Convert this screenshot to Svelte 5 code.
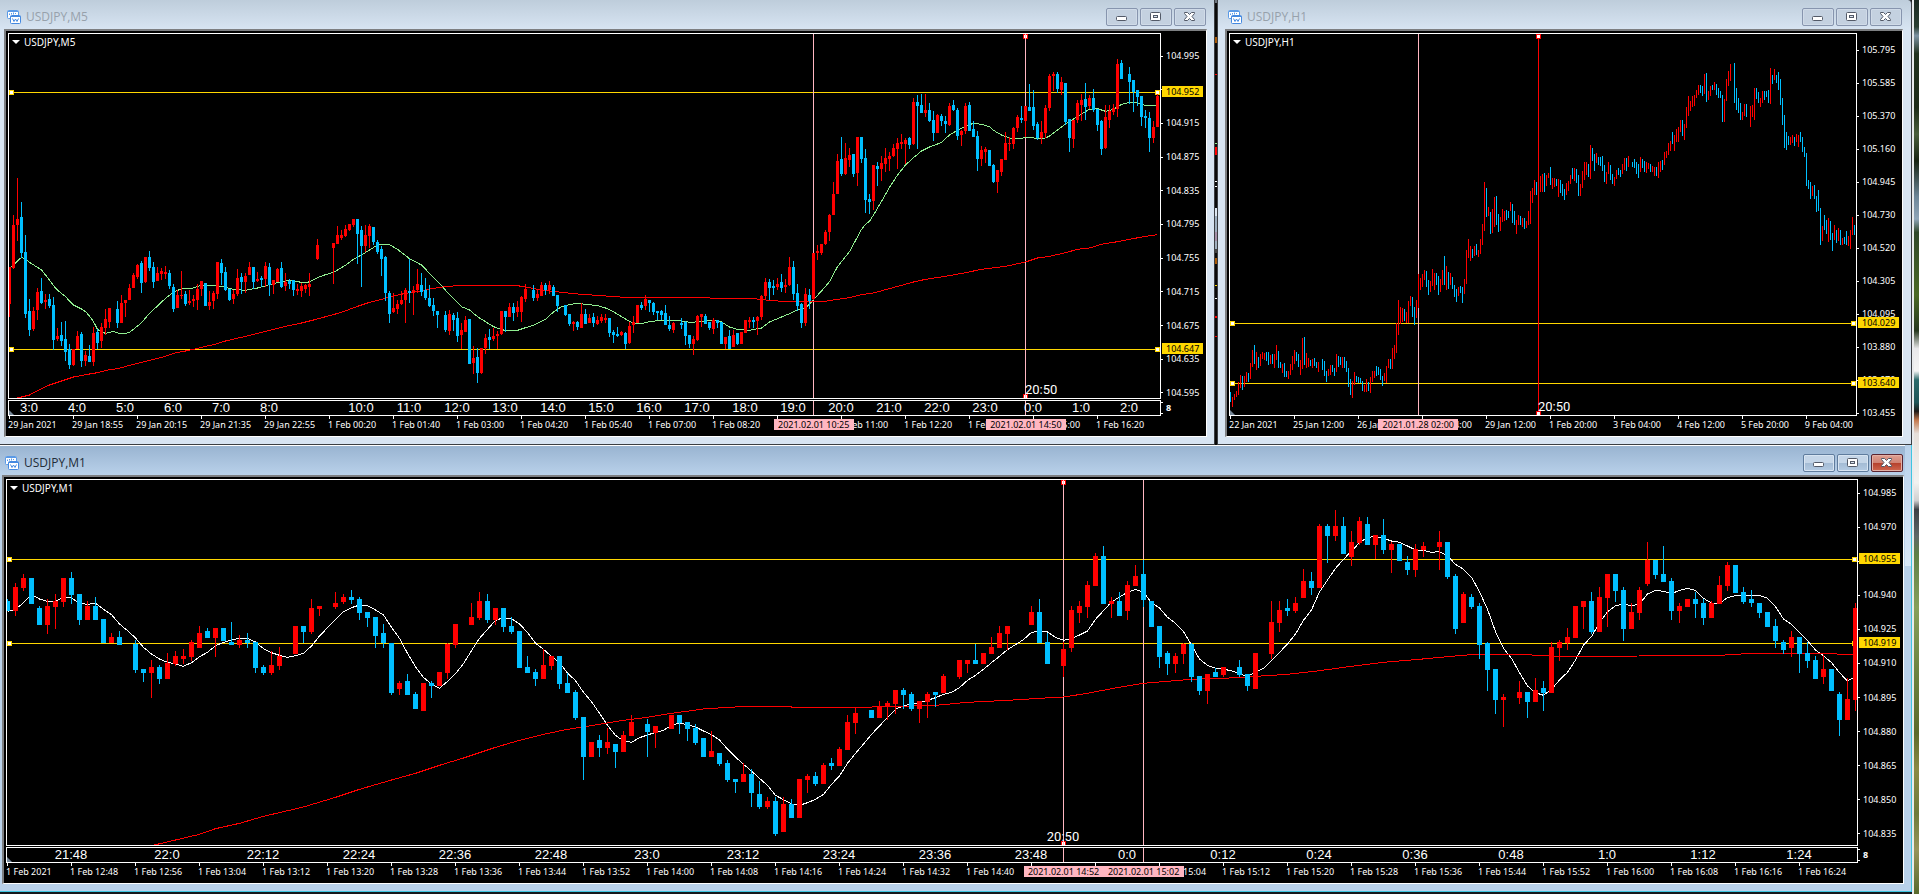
<script>
  // Bars are listed left to right, one slot each: colour (r up, b down), then high, body top,
  // body bottom and low for candles, or high and low for plain bars. "-" is an empty slot.
  // Heights are stored in thirds of a pixel row.
  const m5Bars = `r800 800 912 951,r645 675 804 807,r534 657 675 723,b606 651 759 774,b705 756 942 954,b897 933 990 1008,r921 933 987 993,r864 876 930 960,b834 873 909 912,r882 900 906 927,b882 897 918 924,b891 915 1020 1050,r984 1008 1018 1023,b966 1005 1023 1038,b963 1017 1056 1083,b1032 1048 1095 1107,r1048 1048 1095 1098,r993 1008 1048 1048,b996 1002 1083 1101,r1053 1065 1083 1098,b1035 1068 1085 1086,r981 999 1085 1098,b987 996 1029 1048,r969 981 1023 1044,r927 957 984 1005,r924 924 966 984,-,b903 927 969 984,r885 909 969 969,r900 900 909 951,r852 864 900 900,r819 825 864 864,r792 795 831 837,b783 789 849 879,r771 771 846 849,b753 771 804 813,b786 801 846 864,r801 819 843 843,r804 813 822 840,r798 816 822 837,b810 819 858 867,b852 861 927 936,r870 885 924 924,r813 885 888 897,b873 882 912 918,r870 903 909 915,r885 897 903 921,r852 867 900 930,r843 843 867 888,b849 849 918 918,r873 906 918 930,r873 879 903 927,r786 786 882 897,b777 789 819 855,b801 816 870 873,b867 867 900 903,r870 882 897 912,r807 834 882 888,b819 831 846 882,r819 828 846 879,r786 801 825 825,b801 801 846 867,r816 837 843 846,b828 834 840 861,r786 798 837 861,b789 801 855 888,r840 840 855 882,r804 807 846 846,b786 804 861 864,r819 846 858 873,b837 843 852 867,b840 840 870 888,r852 867 873 885,r849 858 873 891,r852 855 867 879,r819 852 861 888,-,r717 735 777 780,-,-,-,r729 729 744 852,r678 705 732 732,r690 705 714 720,r675 687 708 711,r672 672 690 693,r657 657 675 681,b657 657 702 792,b678 690 738 861,r675 705 738 756,r672 678 708 744,b681 681 726 735,b720 726 756 762,b738 747 777 828,b768 771 879 903,b873 879 942 969,r879 924 936 939,r900 912 927 942,r873 900 912 915,r864 870 900 969,b777 873 879 909,r858 870 879 945,r807 852 870 879,b819 855 876 888,b834 870 894 900,b855 894 918 921,b894 915 933 948,b933 933 945 984,-,b933 945 990 996,r930 942 993 1005,b939 945 960 993,b936 954 1008 1026,r969 990 1005 1048,r948 960 996 996,b957 957 1092 1092,r1038 1074 1089 1122,b1044 1071 1119 1149,r1044 1044 1119 1122,r1002 1014 1044 1062,b987 1011 1020 1048,r984 1008 1018 1023,r993 1002 1008 1048,r933 933 1002 1005,b933 933 951 996,r909 921 951 951,b909 921 939 963,r903 921 936 951,r888 891 936 966,r852 867 897 906,-,b855 870 894 903,r870 882 894 903,r846 855 888 888,b849 855 870 885,r843 855 870 882,b855 861 888 888,b885 885 918 936,-,b915 915 945 948,b942 942 972 978,r963 966 972 993,b963 966 981 990,r909 942 984 984,b927 942 972 972,r942 954 969 969,b939 951 969 981,r948 960 972 975,r942 951 963 969,r942 954 960 969,b954 954 999 1011,b990 996 1005 1029,b981 1002 1008 1011,r993 996 1005 1008,b996 999 1032 1048,r966 978 1029 1032,r948 966 975 999,r915 915 969 969,b906 915 924 930,r885 897 918 930,b900 900 909 936,b906 909 936 945,b933 933 939 960,b930 933 945 960,b915 939 975 975,b948 975 987 993,r966 969 990 999,-,b954 969 975 987,b963 966 1008 1035,b1005 1005 1032 1044,r1008 1018 1032 1065,r945 948 1020 1023,r942 942 951 981,b942 948 972 972,b966 966 984 990,r954 960 987 1002,b960 960 969 984,b966 966 1032 1032,r1011 1011 1032 1048,b990 1008 1048 1048,r990 1005 1041 1041,b999 999 1032 1035,r996 996 1032 1032,r960 960 999 999,r951 960 966 984,b951 960 966 984,r948 951 963 1005,r885 888 951 960,r834 846 888 900,b837 846 864 900,b840 858 864 885,r834 852 861 870,b822 846 864 876,r837 855 861 879,r771 801 855 858,b783 801 882 900,b852 879 918 933,b909 912 969 984,r864 882 969 978,b867 885 903 927,r759 759 897 900,r735 753 759 780,r732 732 759 765,r690 696 732 735,r642 645 696 723,r546 582 645 645,r462 483 582 582,b411 477 522 528,r429 474 522 525,r444 465 480 501,b462 462 522 531,r411 411 519 558,b411 411 477 489,b447 474 600 639,b582 597 606 642,r495 495 603 630,b486 498 507 558,r468 489 507 543,r444 474 492 516,r456 468 477 513,r432 444 468 471,r414 429 447 507,r402 426 432 447,r414 420 432 492,b411 414 435 447,r294 306 432 435,b285 306 318 447,b282 315 339 339,r282 330 339 351,b309 330 363 366,b333 360 399 423,r342 345 399 399,b342 348 363 378,b348 363 372 399,r309 318 375 378,b300 315 330 333,b324 330 408 420,r390 393 405 438,r309 318 393 402,b306 315 393 393,b363 387 411 411,b393 408 477 513,r438 450 477 498,r441 447 456 489,b450 450 498 498,b492 495 546 549,r510 510 546 579,r477 477 516 528,r396 429 480 480,r411 429 432 453,r381 384 432 447,r345 351 384 396,b318 354 360 369,r318 318 363 411,b252 321 333 333,b270 321 378 390,b366 372 414 420,r363 396 414 432,r315 324 399 414,r222 228 324 333,r216 222 228 273,b216 222 267 279,r231 246 270 285,b249 249 366 375,b357 357 414 456,r360 360 417 444,r300 309 360 369,r282 300 315 363,b249 297 321 360,r285 294 318 327,b267 294 330 336,b327 327 375 393,b360 363 447 465,r315 351 444 447,r315 333 360 384,r312 324 336 345,r177 192 327 351,b180 189 237 237,-,b201 222 246 312,b240 240 276 336,b270 270 291 318,b288 288 351 378,b330 348 354 384,b336 354 414 456,r363 381 414 429,r282 288 381 381`;

  const h1Bars = `b1176 1206,r1190 1221,r1182 1200,r1173 1191,r1147 1185,r1125 1164,b1128 1170,r1128 1161,r1116 1146,b1119 1146,r1089 1137,r1050 1101,b1035 1092,r1056 1110,b1071 1104,r1062 1098,r1056 1077,r1059 1080,b1056 1083,b1056 1095,r1065 1092,b1062 1092,r1062 1104,r1035 1080,b1053 1104,b1086 1104,r1092 1119,b1089 1131,b1113 1131,r1113 1137,r1092 1125,r1068 1110,r1050 1092,b1056 1083,b1062 1101,r1080 1125,r1014 1107,b1011 1095,r1059 1104,r1074 1101,b1080 1098,r1077 1104,b1074 1098,b1086 1104,r1086 1116,-,b1077 1110,b1083 1128,b1113 1146,r1107 1128,r1095 1125,b1095 1116,b1104 1128,r1062 1116,b1068 1101,b1071 1095,r1071 1104,b1071 1104,b1083 1116,b1104 1161,b1137 1185,r1143 1194,r1116 1155,b1128 1146,b1131 1149,b1134 1149,b1143 1173,r1155 1176,r1137 1176,b1146 1173,r1131 1179,r1113 1146,r1113 1134,b1098 1128,b1101 1125,b1107 1140,b1128 1158,r1119 1143,r1098 1149,r1077 1104,b1077 1107,r1044 1107,r1035 1077,r969 1059,r900 1005,r921 972,r924 966,b927 963,r936 969,r903 969,r888 918,b891 951,b921 975,r900 954,r822 924,r834 870,r822 861,r810 840,b813 861,b840 885,r843 876,r807 858,r819 870,b819 855,b828 885,r837 876,r810 855,b768 855,r798 870,b816 867,r819 855,b831 867,b855 891,b867 906,r861 888,b858 879,b861 909,r837 882,r750 852,r717 774,r738 783,b747 774,r738 768,b732 765,r750 771,r717 762,r672 735,r546 693,b564 651,r621 648,b636 702,r627 699,r591 681,b588 675,b642 696,r651 693,r627 666,r633 663,b630 660,b633 654,r606 633,b612 669,b633 675,r660 702,r645 675,b648 675,r654 681,b654 687,r663 684,r633 675,r573 672,r564 609,r540 585,b546 585,r546 585,r528 576,r522 576,b519 576,r525 558,r519 534,b501 555,r534 567,r534 561,b537 558,r537 591,b540 579,b552 588,b567 600,r549 585,r543 573,r525 552,b504 537,r504 543,b507 549,b525 588,r552 588,r513 564,r486 540,r486 525,b492 531,r435 537,b444 483,b462 513,r459 489,b471 495,b471 498,b468 513,b495 546,r516 552,r486 522,b495 540,b522 552,r531 558,r510 537,b504 525,b510 531,r492 522,r474 510,b474 513,r468 501,-,b486 501,b477 504,b486 522,b492 534,r471 516,b477 504,b483 516,r486 519,r489 507,b492 516,r498 516,r501 528,b501 528,r486 534,r483 516,b480 510,r456 495,r453 474,r429 465,r423 453,b396 432,r405 453,r387 426,r381 426,r360 396,b360 408,r372 420,r321 384,r288 348,r303 333,r288 321,r285 318,r270 294,r255 285,b255 279,b258 288,r222 282,b219 306,r273 300,r258 288,b255 270,r246 270,b252 285,b264 294,b273 294,b285 366,r297 366,r237 303,r213 258,r192 243,-,b189 309,b264 330,b294 339,b309 360,r336 360,r312 348,b312 351,-,r318 381,r315 351,r264 360,b264 297,b276 309,r294 321,r273 309,b273 300,b273 291,b270 309,r204 312,b225 252,r207 240,b225 249,b216 270,b237 315,b294 375,b345 444,b396 450,b408 435,r411 435,r405 429,b411 438,r402 426,r405 441,b396 426,b411 456,b441 471,b459 558,b540 567,b546 597,r558 588,b555 597,b588 636,b570 633,b624 735,r678 723,b645 690,b660 702,r654 726,b663 720,b699 753,r675 720,b690 729,r684 723,b690 735,r714 735,b711 732,b693 735,r708 738,r690 747,r651 705,b675 705`;

  const m1Bars = `b478 483 514 514,r429 441 513 528,r402 414 444 453,b414 414 491 491,b498 504 555 555,r477 498 555 582,r462 483 501 567,r414 414 486 501,b396 414 465 491,b462 462 540 555,r483 498 540 540,b471 498 540 540,b537 537 610 610,r579 591 610 610,b573 591 615 615,-,b600 612 690 699,b687 687 699 726,r660 681 699 774,b675 681 717 732,r639 669 717 717,r633 648 672 678,r627 648 657 672,r600 606 651 663,r558 579 624 624,b564 573 594 594,r564 564 594 651,b564 564 603 603,b546 606 615 615,r585 600 615 624,b579 600 609 624,b606 606 684 699,b675 681 699 705,r633 675 699 705,r621 648 678 690,-,r558 558 642 642,b558 558 576 609,r477 504 576 582,r498 498 507 528,-,r456 489 501 507,r462 471 486 492,b450 471 480 492,b471 477 519 540,b516 516 534 561,b531 531 588 624,b552 579 610 624,b610 610 759 765,r723 729 747 765,b702 723 765 765,b756 762 807 807,r729 729 813 813,b723 729 738 774,r696 696 738 738,r610 612 699 717,r552 552 615 624,-,r489 531 555 555,r456 483 534 540,b462 483 540 549,r504 504 540 555,b504 504 561 576,b531 558 576 582,b573 573 684 684,b648 681 699 699,b687 696 717 738,r627 675 717 717,r648 648 678 690,b648 648 732 747,b699 729 759 759,b750 756 834 840,b831 831 951 1020,r906 906 951 951,b885 900 924 951,r864 906 924 942,b912 912 936 984,r873 885 936 936,r825 846 888 888,-,b837 852 876 951,r858 858 879 924,-,r825 825 867 867,b825 825 849 882,b846 846 867 903,b852 864 909 915,b894 894 951 951,r873 933 951 951,b939 939 972 978,b960 969 1020 1026,b1017 1017 1026 1059,r969 1002 1026 1026,b987 1002 1059 1101,b1023 1062 1101 1107,r1071 1083 1101 1107,b1071 1083 1182 1188,r1071 1092 1176 1176,b1077 1092 1134 1134,r1017 1017 1134 1134,r1002 1008 1020 1059,b996 1008 1032 1038,r969 975 1032 1032,b954 969 978 990,r921 927 978 978,r825 846 930 930,r804 819 849 882,-,b810 810 834 834,r783 798 834 834,r783 789 801 840,r750 750 792 822,b744 750 766 807,b756 762 807 813,r783 783 807 849,r756 762 786 834,b756 756 766 801,r702 708 759 759,-,r660 660 711 717,r660 660 672 699,b612 660 672 672,r639 639 672 672,r591 621 642 642,r558 579 624 624,r558 558 582 630,-,-,r498 516 555 555,b477 516 610 610,b579 606 672 672,-,r606 627 678 711,r498 510 624 636,r483 498 519 549,r423 435 501 534,r339 348 438 438,b318 348 492 492,r471 483 492 534,b456 483 528 528,r423 435 513 540,r375 408 438 438,b360 402 480 501,b483 483 561 561,b558 558 651 684,b633 639 672 705,r639 648 672 699,r610 612 642 672,b610 612 711 726,b708 708 753 765,r702 702 753 792,b684 696 711 711,r681 681 705 711,-,b660 681 705 711,b702 702 738 753,r639 639 747 747,-,r483 546 642 657,r483 510 549 576,b477 504 513 528,r471 489 513 519,r387 423 474 474,b396 423 444 465,r252 258 444 444,b252 258 288 369,r210 258 288 303,b231 258 342 342,r273 306 351 378,r231 243 309 315,b231 252 315 315,r285 285 315 357,b237 285 330 342,r306 312 330 399,b312 312 363 363,b348 366 390 405,r312 327 390 411,r306 318 330 351,-,r273 306 321 390,b306 306 411 417,b402 408 567 582,r456 462 549 549,b462 471 501 507,b489 498 615 657,b606 610 690 753,b687 687 780 822,r762 771 780 861,-,r723 756 774 792,b756 756 786 834,r714 750 786 786,b723 744 759 813,r606 621 759 759,r600 606 624 663,r564 591 610 630,r498 498 594 594,r483 483 501 567,b456 483 576 582,r441 471 576 576,r402 402 474 561,b402 402 453 486,b441 450 567 603,r489 516 567 567,r441 450 519 540,r306 360 432 438,b360 360 405 417,b318 402 426 426,b414 423 513 540,r489 498 513 549,r477 477 501 501,b456 477 492 534,b477 489 534 555,r483 489 534 534,r408 435 492 492,r366 375 438 453,b375 375 459 459,b441 456 486 492,b450 477 489 501,b489 489 519 534,b516 516 561 561,b537 558 603 624,b600 606 630 642,r573 591 624 651,b591 591 642 699,b606 639 663 684,b648 660 717 717,r645 687 711 732,b687 687 753 753,b756 762 840 888,r714 777 840 840,r489 504 780 813`;

  // Averages: "slot:height" pairs.
  const m5Fast = `0:804 1:796 2:783 3:772 4:777 5:787 8:810 10:840 11:857 12:870 14:890 16:915 18:927 19:935 20:948 21:965 22:988 23:996 24:1000 25:997 26:994 27:999 28:1000 29:1000 30:997 31:988 33:968 35:940 37:918 39:895 41:877 43:866 46:864 48:855 50:855 53:859 56:868 59:871 62:864 65:854 67:848 70:841 72:845 74:849 75:845 77:833 79:824 81:817 84:796 86:778 88:765 90:750 92:735 93:733 95:734 97:748 100:776 103:795 105:820 108:857 110:884 113:920 115:930 117:950 119:965 121:980 123:989 124:991 127:991 129:983 131:976 134:958 136:936 138:920 140:914 142:910 144:913 147:917 149:924 151:935 153:950 155:964 156:969 158:971 160:965 162:962 168:963 170:967 173:965 176:961 178:966 180:981 182:988 185:991 188:984 190:966 192:956 195:941 197:930 199:924 200:912 201:899 203:873 205:845 207:800 210:755 213:688 214:673 215:664 216:645 218:604 220:562 222:525 224:495 226:473 228:453 230:441 232:432 233:427 235:405 237:391 239:378 241:370 243:373 245:380 246:391 248:405 250:414 253:415 254:412 257:415 259:414 260:408 262:390 264:372 266:357 268:342 270:328 272:326 274:334 276:328 278:313 280:307 282:309 283:314 285:317 287:317`;
  const m5Slow = `2:1194 5:1185 8:1166 10:1155 13:1143 16:1131 19:1124 22:1118 25:1109 27:1106 31:1093 35:1081 39:1069 41:1060 44:1053 46:1048 48:1042 51:1034 54:1023 59:1009 64:994 69:979 73:969 76:960 80:947 83:937 87:919 90:907 93:898 96:888 99:880 102:875 105:867 109:860 112:857 127:857 129:861 132:868 135:873 138:877 142:882 149:888 156:894 164:893 174:893 176:895 186:896 190:901 193:904 204:904 207:898 210:893 213:884 216:879 219:869 223:856 226:846 229:838 234:829 239:818 243:808 249:799 254:786 257:774 260:769 264:758 267:748 270:744 273:733 277:725 280:718 284:709 287:704`;
  const m1Fast = `0:514 1:508 2:488 3:463 4:477 5:484 6:484 7:472 8:474 9:490 10:493 11:490 12:508 13:524 14:552 15:572 16:594 17:622 18:642 19:657 20:667 21:672 22:679 23:668 24:650 25:637 26:617 27:607 28:600 29:595 30:595 31:606 32:626 33:638 34:646 35:652 36:647 37:640 38:618 39:588 40:563 41:538 42:515 43:503 44:495 45:497 46:510 47:525 48:562 49:595 50:640 51:680 52:712 53:733 54:745 55:724 56:701 57:671 58:632 59:595 60:568 61:541 62:533 63:536 64:552 65:577 66:610 67:628 68:649 69:668 70:699 71:722 72:757 73:785 74:820 75:856 76:886 77:903 78:907 79:893 80:885 81:877 82:871 83:856 84:849 85:854 86:861 87:873 88:884 89:900 90:927 91:951 92:973 93:993 94:1015 95:1036 96:1066 97:1079 98:1092 99:1096 100:1088 101:1078 102:1063 103:1033 104:1008 105:970 106:940 107:912 108:883 109:858 110:832 111:808 112:797 113:793 114:788 115:781 116:773 117:763 118:757 119:743 120:721 121:706 122:688 123:668 124:649 125:629 126:614 127:599 128:577 129:574 130:576 131:592 132:601 133:596 134:585 135:573 136:538 137:512 138:486 139:471 140:457 141:448 142:457 143:488 144:504 145:532 146:550 147:575 148:615 149:657 150:676 151:685 152:688 153:692 154:702 155:709 156:697 157:685 158:661 159:637 160:612 161:582 162:541 163:510 164:456 165:420 166:385 167:358 168:333 169:308 170:292 171:290 172:295 173:303 174:307 175:318 176:330 177:331 178:337 179:335 180:348 181:373 182:388 183:412 184:455 185:508 186:575 187:625 188:655 189:698 190:738 191:758 192:766 193:748 194:720 195:697 196:660 197:615 198:590 199:548 200:515 201:497 202:492 203:497 204:492 205:462 206:451 207:454 208:461 209:451 210:445 211:451 212:475 213:489 214:490 215:473 216:467 217:466 219:466 220:475 221:500 222:537 223:553 224:578 225:602 226:630 227:647 228:668 229:698 230:723 231:710`;
  const m1Slow = `18:1217 24:1183 26:1166 29:1150 32:1129 37:1101 41:1072 44:1048 48:1020 51:1000 54:976 57:954 61:922 64:901 67:883 70:868 73:857 77:841 80:832 83:820 87:807 90:802 93:799 96:799 98:801 108:801 112:799 116:796 120:787 125:781 129:775 132:771 135:760 138:746 142:730 148:718 152:715 156:709 160:703 164:692 168:679 172:667 176:659 180:650 183:644 189:643 193:648 198:649 204:648 206:646 214:646 218:640 228:640 229:643 231:643`;

  const row = (v) => Math.round(v / 3);

  function parseBars(text, x0, y0, step, half) {
    const up = [];
    const down = [];
    text.split(',').forEach((entry, i) => {
      if (entry === '-') return;
      const v = entry.slice(1).split(' ').map((n) => y0 + row(+n));
      const x = x0 + i * step;
      const low = v[v.length - 1];
      let d = `M${x} ${v[0]}h1V${low}h-1z`;
      if (v.length === 4) d += `M${x - half} ${v[1]}h${2 * half + 1}V${v[2]}h-${2 * half + 1}z`;
      (entry[0] === 'r' ? up : down).push(d);
    });
    return { up: up.join(''), down: down.join('') };
  }

  const parseLine = (text, x0, y0, step) =>
    text
      .split(' ')
      .map((p) => p.split(':'))
      .map(([k, v]) => `${x0 + k * step + 0.5},${(y0 + v / 3).toFixed(2)}`)
      .join(' ');

  const pad = (n) => String(n).padStart(2, '0');
  const m1Times = Array.from({ length: 29 }, (_, k) => {
    const t = 760 + 8 * k;
    return k === 0 ? '1 Feb 2021' : `1 Feb ${pad(Math.floor(t / 60))}:${pad(t % 60)}`;
  });

  const charts = [
    {
      id: 'm5',
      name: 'USDJPY,M5',
      box: { x: 9, y: 34, w: 1151, h: 364 },
      bars: parseBars(m5Bars, 9, 0, 4, 1),
      lines: [
        { color: '#90ee90', points: parseLine(m5Fast, 9, 0, 4) },
        { color: '#ff0000', points: parseLine(m5Slow, 9, 0, 4) }
      ],
      levels: [{ y: 92, price: '104.952' }, { y: 349, price: '104.647' }],
      marks: [
        { x: 813, color: '#ffb6c1', time: '2021.02.01 10:25' },
        { x: 1025, color: '#ffb6c1', time: '2021.02.01 14:50', grips: true }
      ],
      note: { x: 1025, centered: false },
      prices: ['104.995', '104.955', '104.915', '104.875', '104.835', '104.795', '104.755', '104.715', '104.675', '104.635', '104.595'],
      times: ['29 Jan 2021', '29 Jan 18:55', '29 Jan 20:15', '29 Jan 21:35', '29 Jan 22:55', '1 Feb 00:20', '1 Feb 01:40', '1 Feb 03:00', '1 Feb 04:20', '1 Feb 05:40', '1 Feb 07:00', '1 Feb 08:20', '1 Feb 09:40', '1 Feb 11:00', '1 Feb 12:20', '1 Feb 13:40', '1 Feb 15:00', '1 Feb 16:20'],
      clockStart: 20,
      clock: [['3:0', 48], ['4:0', 48], ['5:0', 48], ['6:0', 48], ['7:0', 48], ['8:0', 92], ['10:0', 48], ['11:0', 48], ['12:0', 48], ['13:0', 48], ['14:0', 48], ['15:0', 48], ['16:0', 48], ['17:0', 48], ['18:0', 48], ['19:0', 48], ['20:0', 48], ['21:0', 48], ['22:0', 48], ['23:0', 48], ['0:0', 48], ['1:0', 48], ['2:0', 30]]
    },
    {
      id: 'h1',
      name: 'USDJPY,H1',
      box: { x: 1230, y: 34, w: 626, h: 381 },
      bars: parseBars(h1Bars, 1230, 0, 2, 0),
      lines: [],
      levels: [{ y: 323, price: '104.029' }, { y: 383, price: '103.640' }],
      marks: [
        { x: 1418, color: '#ffb6c1', time: '2021.01.28 02:00' },
        { x: 1538, color: '#ff0000', front: true, grips: true }
      ],
      note: { x: 1538, centered: false },
      prices: ['105.795', '105.585', '105.370', '105.160', '104.945', '104.730', '104.520', '104.305', '104.095', '103.880', '103.670', '103.455'],
      times: ['22 Jan 2021', '25 Jan 12:00', '26 Jan 20:00', '28 Jan 04:00', '29 Jan 12:00', '1 Feb 20:00', '3 Feb 04:00', '4 Feb 12:00', '5 Feb 20:00', '9 Feb 04:00']
    },
    {
      id: 'm1',
      name: 'USDJPY,M1',
      active: true,
      box: { x: 7, y: 480, w: 1850, h: 365 },
      bars: parseBars(m1Bars, 7, 440, 8, 2),
      lines: [
        { color: '#ffffff', points: parseLine(m1Fast, 7, 440, 8) },
        { color: '#ff0000', points: parseLine(m1Slow, 7, 440, 8) }
      ],
      levels: [{ y: 559, price: '104.955' }, { y: 643, price: '104.919' }],
      marks: [
        { x: 1063, color: '#ffb6c1', time: '2021.02.01 14:52', grips: true },
        { x: 1143, color: '#ffb6c1', time: '2021.02.01 15:02' }
      ],
      note: { x: 1063, centered: true },
      prices: ['104.985', '104.970', '104.955', '104.940', '104.925', '104.910', '104.895', '104.880', '104.865', '104.850', '104.835'],
      times: m1Times,
      clockStart: 64,
      clock: ['21:48', '22:0', '22:12', '22:24', '22:36', '22:48', '23:0', '23:12', '23:24', '23:36', '23:48', '0:0', '0:12', '0:24', '0:36', '0:48', '1:0', '1:12', '1:24'].map((t) => [t, t === '1:24' ? 58 : 96])
    }
  ];

  const pct = (n, total) => `${((n / total) * 100).toFixed(4)}%`;
</script>

{#snippet grip(x, y, color)}
  <rect {x} {y} width="5" height="5" fill={color} />
  <rect x={x + 1} y={y + 1} width="3" height="3" fill="#fff" />
{/snippet}

{#snippet vertical(c, m)}
  <rect x={m.x} y={c.box.y} width="1" height={c.box.h} fill={m.color} />
  {#if m.grips}
    {@render grip(m.x - 2, c.box.y, '#ff0000')}
    {@render grip(m.x - 2, c.box.y + c.box.h - 4, '#ff0000')}
    {#if !m.front}<rect x={m.x} y={c.box.y} width="1" height={c.box.h} fill={m.color} />{/if}
  {/if}
{/snippet}

{#snippet win(c)}
  <section class="window {c.id}" class:active={c.active} aria-label={c.name}>
    <header>
      <svg class="app" width="14" height="14" viewBox="0 0 14 14" aria-hidden="true">
        <rect x="0.5" y="0.5" width="11" height="8" rx="1" fill="#fff" stroke="#5b9ae6" />
        <path d="M1 1.5h10" stroke="#5b9ae6" stroke-width="1" />
        <path d="M2.5 5V3.500M4.500 4.500V3M6.500 4.500V2.500M8.500 4V3" stroke="#5b9ae6" />
        <rect x="3.500" y="5.500" width="10" height="8" rx="1" fill="#fff" stroke="#4489e0" />
        <path d="M3.500 6.500h10" stroke="#4489e0" />
        <path d="M5.500 8.500L7 11.500l1.500-2.500L10 11.500l1.500-3" fill="none" stroke="#4489e0" />
      </svg>
      <h2>{c.name}</h2>
      <button class="ctl" aria-label="Minimize">
        <svg width="12" height="10" viewBox="0 0 12 10"><rect x="0.5" y="4.500" width="10" height="4" rx="1" fill="#fff" stroke="#535a68" /></svg>
      </button>
      <button class="ctl" aria-label="Maximize">
        <svg width="12" height="10" viewBox="0 0 12 10"><rect x="0.5" y="0.5" width="10" height="8" rx="1" fill="#fff" stroke="#535a68" /><rect x="3.500" y="3.500" width="4" height="2" fill="#dbe5f0" stroke="#535a68" /></svg>
      </button>
      <button class="ctl close" aria-label="Close">
        <svg width="12" height="10" viewBox="0 0 12 10"><path d="M0.5 0.5h3l2 2 2-2h3v1L8 4.500l2.500 3v1h-3l-2-2-2 2h-3v-1L3 4.500L0.5 1.500z" fill="#fff" stroke="#535a68" /></svg>
      </button>
    </header>
    <div class="well">
      <div class="chart" class:single={!c.clock}>
        <div class="pane">
          <svg class="plot" viewBox="{c.box.x} {c.box.y} {c.box.w} {c.box.h}" preserveAspectRatio="none" shape-rendering="crispEdges" role="img" aria-label="{c.name} price chart">
            {#each c.levels as l}
              <rect x={c.box.x} y={l.y} width={c.box.w} height="1" fill="#ffd700" />
              {@render grip(c.box.x, l.y - 2, '#ffd700')}
              {@render grip(c.box.x + c.box.w - 5, l.y - 2, '#ffd700')}
            {/each}
            {#each c.marks.filter((m) => !m.front) as m}{@render vertical(c, m)}{/each}
            {#each c.lines as l}
              <polyline points={l.points} fill="none" stroke={l.color} />
            {/each}
            <path d={c.bars.up} fill="#ff0000" />
            <path d={c.bars.down} fill="#00bfff" />
            {#each c.marks.filter((m) => m.front) as m}{@render vertical(c, m)}{/each}
          </svg>
          <button class="symbol"><i></i>{c.name}</button>
          <span class="note" class:centered={c.note.centered} style="left:{pct(c.note.x - c.box.x, c.box.w)}">20:50</span>
          {#if !c.clock}<i class="corner"></i>{/if}
        </div>
        <div class="prices">
          {#each c.prices as p}<span>{p}</span>{/each}
          {#each c.levels as l}
            <b style="top:{pct(l.y - c.box.y + 1, c.box.h + (c.clock ? 2 : 5))}">{l.price}</b>
          {/each}
        </div>
        {#if c.clock}
          <div class="pane clock">
            <i class="corner"></i>
            {#each c.marks as m}<i class="rule" style="left:{pct(m.x - c.box.x, c.box.w)}"></i>{/each}
            <span class="slot" style="width:{pct(c.clockStart, c.box.w)}"></span>
            {#each c.clock as [t, w]}
              <span class="slot" style="width:{pct(w, c.box.w)}"><span>{t}</span></span>
            {/each}
          </div>
          <div class="scale"><span>8</span></div>
        {/if}
        <div class="times">
          {#each c.times as t}
            <span class="time" style="width:{pct(64, c.box.w)}"><span>{t}</span></span>
          {/each}
          {#each c.marks.filter((m) => m.time) as m}
            <b style="left:{pct(m.x - c.box.x, c.box.w)}">{m.time}</b>
          {/each}
        </div>
      </div>
    </div>
  </section>
{/snippet}

<main>
  {#each charts as c (c.id)}{@render win(c)}{/each}
  <div class="seam"></div>
  <div class="wallpaper"></div>
</main>

<style>
  :global(body) {
    margin: 0;
    background: #1b1d20;
  }
  main {
    display: grid;
    grid-template-columns: minmax(0, 1215fr) 2px minmax(0, 695fr) 7px;
    grid-template-rows: minmax(0, 445fr) minmax(0, 447fr) 2px;
    grid-template-areas: 'm5 seam h1 photo' 'm1 m1 m1 photo' '. . . photo';
    height: 100vh;
    min-height: 480px;
    overflow: hidden;
    font-family: 'Noto Sans', 'Open Sans', sans-serif;
    background: #15181b;
  }
  .m5 { grid-area: m5; }
  .h1 { grid-area: h1; }
  .m1 { grid-area: m1; }

  .window {
    box-sizing: border-box;
    display: flex;
    flex-direction: column;
    min-width: 0;
    min-height: 0;
    padding: 0 7px 7px 4px;
    border: solid #3b3e43;
    border-width: 0 1px 1px 0;
    background: linear-gradient(#becddb, #d7e4f2 29px);
  }
  .h1 {
    padding-left: 7px;
    padding-right: 8px;
    border-left-width: 1px;
    border-top-right-radius: 4px;
  }
  .active {
    padding: 1px 7px 7px 2px;
    border-color: #3fc5e0;
    background:
      linear-gradient(#b9d1ea, #d9e8f8) 100% 0 / 6px 121px no-repeat,
      linear-gradient(#fff 1px, #99b4d1 1px, #b9d1ea 30px);
  }

  header {
    display: flex;
    align-items: center;
    flex: none;
    gap: 2px;
    height: 29px;
    padding: 5px 1px 0 3px;
    box-sizing: border-box;
  }
  .app { flex: none; }
  h2 {
    flex: 1;
    min-width: 0;
    margin: 0 0 0 3px;
    font: 400 12px/16px 'Open Sans', 'Noto Sans', sans-serif;
    color: #97a1ab;
    white-space: nowrap;
  }
  .active h2 { color: #222c38; }

  .ctl {
    display: grid;
    place-items: center;
    flex: none;
    width: 32px;
    height: 18px;
    padding: 0;
    border: 1px solid #8795ae;
    border-radius: 2px;
    background: #c4d1e0;
    box-shadow: inset 0 0 0 1px #d0dbe8;
  }
  .active .ctl {
    border-color: #5f7c9d;
    background: linear-gradient(#c5d6e8 50%, #a3bbd4 50%, #b4cbe3);
    box-shadow: inset 0 0 0 1px #d8e5f2;
  }
  .active .close {
    border-color: #5b2430;
    background: linear-gradient(#dfa092 0, #d08273 50%, #b5402c 50%, #d0674f);
    box-shadow: inset 0 0 0 1px #e3b0a5;
  }

  .well {
    flex: 1;
    min-height: 0;
    padding: 2px 0 0 2px;
    border: solid #fff;
    border-width: 2px 1px 1px 2px;
    border-top-color: #7d7f82;
    border-left-color: #7d7f82;
    background: #000;
  }
  .chart {
    display: grid;
    grid-template-columns: minmax(0, 1fr) 45px;
    grid-template-rows: minmax(0, 1fr) 1px 16px 20px;
    height: 100%;
    color: #fff;
    font-size: 9px;
    line-height: 12px;
    white-space: nowrap;
  }
  .single { grid-template-rows: minmax(0, 1fr) 20px; }

  .pane {
    position: relative;
    min-width: 0;
    min-height: 0;
    border: 1px solid #fff;
  }
  .plot {
    display: block;
    width: 100%;
    height: 100%;
  }
  .symbol {
    position: absolute;
    top: 2px;
    left: 3px;
    display: flex;
    align-items: center;
    gap: 4px;
    padding: 0;
    border: 0;
    background: none;
    color: #fff;
    font: 400 10px/12px 'Noto Sans', 'Open Sans', sans-serif;
  }
  .symbol i {
    border: 4px solid transparent;
    border-top-color: #fff;
    border-bottom: 0;
  }
  .note {
    position: absolute;
    bottom: 0;
    font: 400 13px/16px Roboto, sans-serif;
  }
  .centered { transform: translateX(-50%); }
  .corner {
    position: absolute;
    left: 0;
    bottom: 0;
    border: solid transparent;
    border-width: 5px 0 0 5px;
    border-left-color: #778899;
  }

  .prices {
    position: relative;
    display: flex;
    flex-direction: column;
    justify-content: space-between;
    padding: 17px 0 0;
  }
  .m1 .prices { padding: 8px 0 6px; }
  .h1 .prices {
    padding-top: 11px;
    margin-bottom: -3px;
  }
  .prices span {
    display: flex;
    align-items: center;
    gap: 3px;
  }
  .prices span::before {
    content: '';
    width: 2px;
    height: 1px;
    background: #fff;
  }
  .prices b {
    position: absolute;
    left: 1px;
    width: 37px;
    padding-left: 4px;
    margin-top: -6px;
    background: #ffd700;
    color: #000;
    font-weight: 400;
    line-height: 11px;
  }

  .clock {
    grid-row: 3;
    display: flex;
    font: 400 13px/14px 'Liberation Sans', sans-serif;
  }
  .slot { flex: none; }
  .slot span {
    display: inline-block;
    transform: translateX(-50%);
  }
  .rule {
    position: absolute;
    top: 0;
    bottom: 0;
    width: 1px;
    background: #ffb6c1;
  }
  .scale {
    grid-row: 3;
    padding-left: 5px;
    font-weight: 700;
    line-height: 16px;
    background:
      linear-gradient(#fff, #fff) 0 2px / 2px 1px no-repeat,
      linear-gradient(#fff, #fff) 0 13px / 2px 1px no-repeat;
  }

  .times {
    position: relative;
    display: flex;
    grid-row: 4;
    grid-column: 1;
    min-width: 0;
    padding-left: 1px;
    margin-right: 1px;
  }
  .single .times { grid-row: 2; }
  .time { flex: none; }
  .time::before {
    content: '';
    display: block;
    width: 1px;
    height: 3px;
    background: #fff;
  }
  .time span {
    display: block;
    margin-left: -1px;
  }
  .times b {
    position: absolute;
    top: 3px;
    width: 80px;
    margin-left: 1px;
    transform: translateX(-50%);
    background: #ffb6c1;
    color: #000;
    font-weight: 400;
    line-height: 11px;
    text-align: center;
  }

  .seam {
    grid-area: seam;
    background: linear-gradient(
      #6f7780 0 3px, #0a0a0a 3px 37px, #a85a08 37px 43px, #0a0a0a 43px 74px, #f00 74px 75px, #0a0a0a 75px 143px,
      #90ee90 143px 144px, #0a0a0a 144px 147px, #f00 147px 155px, #0a0a0a 155px 181px, #fff 181px 182px, #0a0a0a 182px 186px,
      #fff 186px 187px, #0a0a0a 187px 208px, #dde7f1 208px 216px, #9fb0c0 216px 232px, #a58fa8 232px 241px, #9fb0c0 241px 249px,
      #444 249px 253px, #0a0a0a 253px 258px, #a85a08 258px 264px, #0a0a0a 264px 285px, #ffd700 285px 286px, #0a0a0a 286px 298px,
      #fff 298px 299px, #0a0a0a 299px 316px, #f00 316px 318px, #0a0a0a 318px 336px, #f00 336px 337px, #0a0a0a 337px);
  }
  .wallpaper {
    grid-area: photo;
    border-left: 2px solid #e9ebed;
    background: linear-gradient(
      #1c2a22 0, #2c4032 3%, #7d93a3 4%, #22331f 6%, #1d2b18 12%, #4a5f3c 15%, #182412 18%, #6d8698 22%, #8fa5b8 24.5%,
      #30482a 26%, #4c6a25 33%, #27391f 37%, #e8e8ea 39%, #f4f4f4 41.5%, #2b6a6b 42.5%, #1f5558 45%, #1d1a18 46%,
      #c2774c 47%, #e6dfda 48.5%, #f2f2f0 54%, #cfcfcf 56%, #3c3f44 57%, #5f6868 60%, #5f8046 62%, #87a05a 68%,
      #6d8440 75%, #5d6a2a 82%, #8b8a45 86%, #6f7b3a 91%, #97945a 95%, #586a2c 100%);
  }
</style>
